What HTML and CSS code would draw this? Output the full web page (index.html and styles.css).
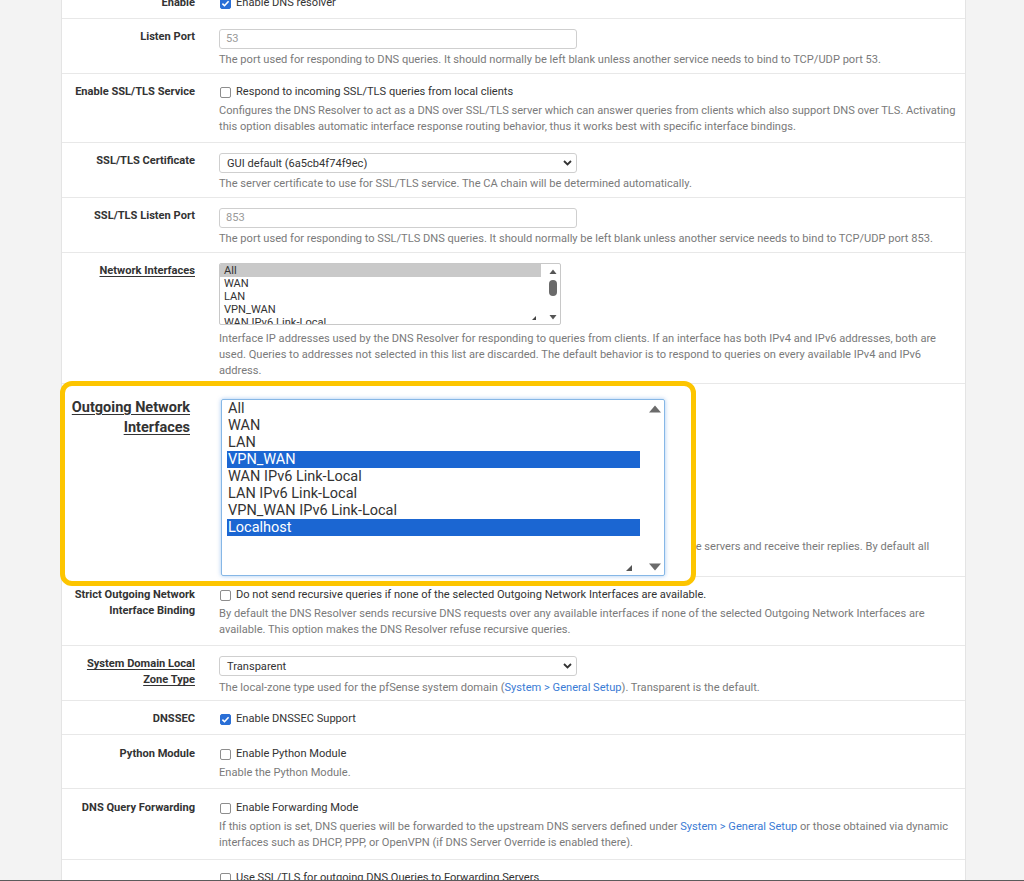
FILE: index.html
```html
<!DOCTYPE html>
<html lang="en">
<head>
<meta charset="utf-8">
<title>DNS Resolver</title>
<link rel="stylesheet" href="styles.css">
</head>
<body>
<div class="viewport">
  <div class="panel">
    <div class="row">
      <div class="label">Enable</div>
      <div class="field">
        <div class="check"><span class="box on"><svg viewBox="0 0 11 11" width="11" height="11"><path d="M2.4 5.6 L4.5 7.7 L8.6 3.2" fill="none" stroke="#fff" stroke-width="1.6"/></svg></span>Enable DNS resolver</div>
      </div>
    </div>

    <div class="row row-input">
      <div class="label">Listen Port</div>
      <div class="field">
        <div class="input">53</div>
        <div class="help">The port used for responding to DNS queries. It should normally be left blank unless another service needs to bind to TCP/UDP port 53.</div>
      </div>
    </div>

    <div class="row">
      <div class="label">Enable SSL/TLS Service</div>
      <div class="field">
        <div class="check"><span class="box"></span>Respond to incoming SSL/TLS queries from local clients</div>
        <div class="help">Configures the DNS Resolver to act as a DNS over SSL/TLS server which can answer queries from clients which also support DNS over TLS. Activating this option disables automatic interface response routing behavior, thus it works best with specific interface bindings.</div>
      </div>
    </div>

    <div class="row row-input">
      <div class="label">SSL/TLS Certificate</div>
      <div class="field">
        <div class="select"><span>GUI default (6a5cb4f74f9ec)</span><svg viewBox="0 0 9 6" width="9" height="6"><path d="M1 1 L4.5 4.5 L8 1" fill="none" stroke="#333" stroke-width="1.8"/></svg></div>
        <div class="help">The server certificate to use for SSL/TLS service. The CA chain will be determined automatically.</div>
      </div>
    </div>

    <div class="row row-input">
      <div class="label">SSL/TLS Listen Port</div>
      <div class="field">
        <div class="input">853</div>
        <div class="help">The port used for responding to SSL/TLS DNS queries. It should normally be left blank unless another service needs to bind to TCP/UDP port 853.</div>
      </div>
    </div>

    <div class="row row-list">
      <div class="label"><span class="ul">Network Interfaces</span></div>
      <div class="field">
        <div class="list">
          <div class="items">
            <div class="gray">All</div>
            <div>WAN</div>
            <div>LAN</div>
            <div>VPN_WAN</div>
            <div>WAN IPv6 Link-Local</div>
          </div>
          <svg class="sbar" viewBox="0 0 19 60" width="19" height="60"><polygon points="8.5,10 15.5,10 12,5.5" fill="#555"/><rect x="8" y="16" width="8" height="16" rx="4" fill="#6a6a6a"/><polygon points="8.5,51 15.5,51 12,55.5" fill="#555"/></svg>
          <svg class="grip" viewBox="0 0 4 4" width="4" height="4"><polygon points="4,0 4,4 0,4" fill="#444"/></svg>
        </div>
        <div class="help">Interface IP addresses used by the DNS Resolver for responding to queries from clients. If an interface has both IPv4 and IPv6 addresses, both are used. Queries to addresses not selected in this list are discarded. The default behavior is to respond to queries on every available IPv4 and IPv6 address.</div>
      </div>
    </div>

    <div class="row row-list row-out">
      <div class="label"><span class="ul hidden">Outgoing Network Interfaces</span></div>
      <div class="field">
        <div class="list tall hidden">
          <div class="items">
            <div>All</div>
            <div>WAN</div>
            <div>LAN</div>
            <div class="blue">VPN_WAN</div>
            <div>WAN IPv6 Link-Local</div>
            <div>LAN IPv6 Link-Local</div>
            <div>VPN_WAN IPv6 Link-Local</div>
            <div class="blue">Localhost</div>
          </div>
        </div>
        <div class="help">Utilize different network interface(s) that the DNS Resolver will use to send queries to authoritative servers and receive their replies. By default all interfaces are used.</div>
      </div>
    </div>

    <div class="row">
      <div class="label">Strict Outgoing Network<br>Interface Binding</div>
      <div class="field">
        <div class="check"><span class="box"></span>Do not send recursive queries if none of the selected Outgoing Network Interfaces are available.</div>
        <div class="help">By default the DNS Resolver sends recursive DNS requests over any available interfaces if none of the selected Outgoing Network Interfaces are available. This option makes the DNS Resolver refuse recursive queries.</div>
      </div>
    </div>

    <div class="row row-input row-zone">
      <div class="label"><span class="ul">System Domain Local</span><br><span class="ul">Zone Type</span></div>
      <div class="field">
        <div class="select"><span>Transparent</span><svg viewBox="0 0 9 6" width="9" height="6"><path d="M1 1 L4.5 4.5 L8 1" fill="none" stroke="#333" stroke-width="1.8"/></svg></div>
        <div class="help">The local-zone type used for the pfSense system domain (<a class="link">System &gt; General Setup</a>). Transparent is the default.</div>
      </div>
    </div>

    <div class="row">
      <div class="label">DNSSEC</div>
      <div class="field">
        <div class="check"><span class="box on"><svg viewBox="0 0 11 11" width="11" height="11"><path d="M2.4 5.6 L4.5 7.7 L8.6 3.2" fill="none" stroke="#fff" stroke-width="1.6"/></svg></span>Enable DNSSEC Support</div>
      </div>
    </div>

    <div class="row row-low">
      <div class="label">Python Module</div>
      <div class="field">
        <div class="check"><span class="box"></span>Enable Python Module</div>
        <div class="help">Enable the Python Module.</div>
      </div>
    </div>

    <div class="row row-low row-fwd">
      <div class="label">DNS Query Forwarding</div>
      <div class="field">
        <div class="check"><span class="box"></span>Enable Forwarding Mode</div>
        <div class="help">If this option is set, DNS queries will be forwarded to the upstream DNS servers defined under <a class="link">System &gt; General Setup</a> or those obtained via dynamic interfaces such as DHCP, PPP, or OpenVPN (if DNS Server Override is enabled there).</div>
      </div>
    </div>

    <div class="row">
      <div class="label"></div>
      <div class="field">
        <div class="check"><span class="box"></span>Use SSL/TLS for outgoing DNS Queries to Forwarding Servers</div>
        <div class="help">When set in conjunction with DNS Query Forwarding, queries to all upstream forwarding DNS servers will be sent using SSL/TLS on the default port of 853.</div>
      </div>
    </div>
  </div>

  <div class="callout">
    <div class="callout-label"><span class="ul">Outgoing Network</span><br><span class="ul">Interfaces</span></div>
    <div class="biglist">
      <div class="items">
        <div>All</div>
        <div>WAN</div>
        <div>LAN</div>
        <div class="blue">VPN_WAN</div>
        <div>WAN IPv6 Link-Local</div>
        <div>LAN IPv6 Link-Local</div>
        <div>VPN_WAN IPv6 Link-Local</div>
        <div class="blue">Localhost</div>
      </div>
      <svg class="sbar" viewBox="0 0 24 175" width="24" height="175"><polygon points="9,12.5 21,12.5 15,5.5" fill="#6b6b6b"/><polygon points="9,163.5 21,163.5 15,170.5" fill="#6b6b6b"/></svg>
      <svg class="biggrip" viewBox="0 0 6 6" width="6" height="6"><polygon points="6,0 6,6 0,6" fill="#555"/></svg>
    </div>
  </div>
</div>
</body>
</html>
```

FILE: styles.css
```css
* { box-sizing: border-box; }

body {
  margin: 0;
  background: #f3f3f3;
  font-family: Roboto, "Liberation Sans", sans-serif;
  font-size: 11.1px;
  color: #333;
}

.viewport {
  position: relative;
  height: 881px;
  overflow: hidden;
  border-bottom: 1px solid #5b5b5b;
}

.panel {
  margin: -15px 58px 0 61px;
  background: #fff;
  border-left: 1px solid #e4e4e4;
  border-right: 1px solid #e4e4e4;
}

.row {
  display: grid;
  grid-template-columns: 133px 1fr;
  column-gap: 24px;
  padding: 10px 6px 7px 0;
  border-bottom: 1px solid #e8e8e8;
}

.row-input { padding-bottom: 5px; }
.row-list { padding-bottom: 4px; }
.row-out { padding-bottom: 5px; }
.row-zone { padding-bottom: 4px; }
.row-low { padding-top: 11px; }
.row-fwd { padding-bottom: 8px; }

.label {
  text-align: right;
  font-weight: 700;
  line-height: 16px;
  color: #333;
}

.ul {
  text-decoration: underline;
  text-underline-offset: 2px;
}

.hidden { visibility: hidden; }

.field { min-width: 0; }

.check {
  display: flex;
  align-items: center;
  line-height: 16px;
  color: #333;
}

.box {
  flex: none;
  width: 11px;
  height: 11px;
  margin: 0 5px 0 1px;
  border: 1px solid #8d8d8d;
  border-radius: 2px;
  background: #fff;
  display: flex;
  align-items: center;
  justify-content: center;
}

.box svg { display: block; flex: none; }

.box.on {
  background: #2a6fd6;
  border-color: #2a6fd6;
}

.help {
  margin-top: 3px;
  line-height: 16px;
  color: #7a7a7a;
}

.list + .help { margin-top: 6px; }
.row-zone .help { margin-top: 4px; }

.link { color: #3a7bd5; text-decoration: none; }

.input {
  width: 358px;
  height: 20px;
  padding-left: 6px;
  border: 1px solid #cfcfcf;
  border-radius: 3px;
  line-height: 18px;
  color: #9a9a9a;
}

.select {
  display: flex;
  align-items: center;
  justify-content: space-between;
  width: 358px;
  height: 20px;
  padding: 0 4px 0 7px;
  border: 1px solid #cfcfcf;
  border-radius: 3px;
  color: #333;
}

.select svg { display: block; }

.list {
  position: relative;
  display: flex;
  width: 342px;
  height: 62px;
  border: 1px solid #c8c8c8;
  border-radius: 2px;
  overflow: hidden;
}

.list.tall { height: 139px; }

.list .items {
  flex: 1;
  min-width: 0;
  overflow: hidden;
  line-height: 13px;
  color: #333;
}

.list .items div {
  padding-left: 4px;
  white-space: nowrap;
}

.list .items .gray { background: #c9c9c9; }

.items .blue {
  background: #1b66d2;
  color: #fff;
}

.sbar { display: block; flex: none; }

.grip {
  position: absolute;
  right: 24px;
  bottom: 4px;
  display: block;
}

.callout {
  position: absolute;
  left: 60px;
  top: 381px;
  width: 636px;
  height: 205px;
  display: flex;
  align-items: flex-start;
  column-gap: 31px;
  padding-top: 12px;
  border: 5px solid #fdc500;
  border-radius: 12px;
  background: #fff;
}

.callout-label {
  flex: none;
  width: 125px;
  text-align: right;
  font-weight: 700;
  font-size: 14.5px;
  line-height: 20px;
  color: #333;
}

.biglist {
  position: relative;
  flex: none;
  display: flex;
  width: 444px;
  height: 177px;
  margin-top: 1px;
  border: 1px solid #86b7e6;
  border-radius: 2px;
  box-shadow: 0 0 4px rgba(90, 155, 230, 0.55);
}

.biglist .items {
  flex: 1;
  min-width: 0;
  padding-left: 5px;
  font-size: 14.5px;
  line-height: 17px;
  color: #333;
}

.biglist .items div {
  padding-left: 1px;
  white-space: nowrap;
}

.biggrip {
  position: absolute;
  right: 32px;
  bottom: 4px;
  display: block;
}
```
